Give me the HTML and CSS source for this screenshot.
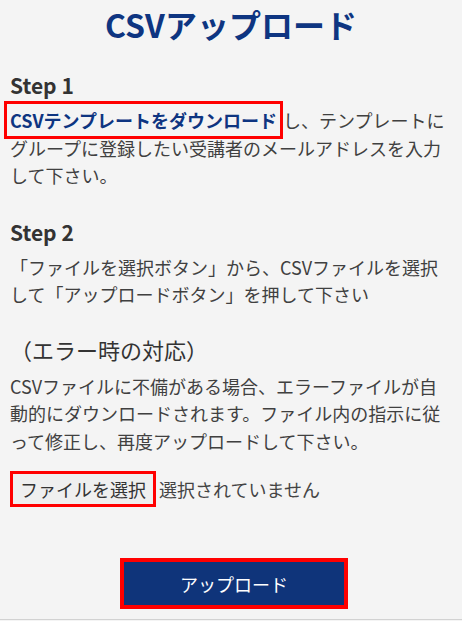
FILE: index.html
```html
<!DOCTYPE html>
<html lang="ja">
<head>
  <meta charset="UTF-8">
  <title>CSVアップロード</title>
  <meta name="viewport" content="width=device-width,initial-scale=1">
  <link rel="stylesheet" href="styles.css">
</head>
<body>
  <div class="page">
    <h1 class="title">CSVアップロード</h1>

    <div class="step">
      <h2>Step 1</h2>
      <p><a href="#" class="tpl-link">CSVテンプレートをダウンロード</a>し、テンプレートにグループに登録したい受講者のメールアドレスを入力して下さい。</p>
    </div>

    <div class="step">
      <h2>Step 2</h2>
      <p>「ファイルを選択ボタン」から、CSVファイルを選択して「アップロードボタン」を押して下さい</p>
    </div>

    <div class="step error">
      <h3>（エラー時の対応）</h3>
      <p>CSVファイルに不備がある場合、エラーファイルが自動的にダウンロードされます。ファイル内の指示に従って修正し、再度アップロードして下さい。</p>
    </div>

    <form class="upload" onsubmit="return false;">
      <div class="file-row">
        <label class="file-btn">ファイルを選択<input type="file" accept=".csv"></label>
        <span class="file-name">選択されていません</span>
      </div>
      <div class="submit-row">
        <button type="submit" class="upload-btn">アップロード</button>
      </div>
    </form>
  </div>
</body>
</html>
```

FILE: styles.css
```css
html, body {
  margin: 0;
  background: #f4f4f4;
}
body {
  font-family: "Noto Sans CJK JP", "Noto Sans", sans-serif;
  color: #404040;
}
.page {
  box-sizing: border-box;
  min-height: 620px;
  padding: 0 10px;
  border-bottom: 1px solid #d2d2d2;
}

.title {
  margin: 0;
  font-size: 32px;
  line-height: 48px;
  font-weight: bold;
  text-align: center;
  color: #0e3581;
}

.step h2 {
  margin: 22px 0 7px;
  font-size: 21px;
  line-height: 30px;
  font-weight: 600;
  color: #333;
}
.step + .step h2 {
  margin-top: 27px;
}
.step h3 {
  margin: 24px 0 8px;
  font-size: 22px;
  line-height: 32px;
  font-weight: normal;
  color: #333;
}
.step p {
  margin: 0;
  font-size: 18px;
  line-height: 27.5px;
}

/* テンプレートのリンク（赤枠で強調） */
.tpl-link {
  font-weight: bold;
  color: #0e3581;
  text-decoration: none;
  outline: 3px solid #f00;
  outline-offset: 3px;
  margin-right: 6px;
}

.upload {
  margin-top: 19px;
}
.file-row {
  display: flex;
  align-items: center;
  gap: 6px;
  font-size: 18px;
}
.file-btn {
  margin-left: 3px;
  padding: 0 7px;
  line-height: 30px;
  background: #efefef;
  color: #333;
  outline: 3px solid #f00;
  cursor: pointer;
}
.file-btn input {
  display: none;
}
.file-name {
  color: #444;
}

.submit-row {
  display: flex;
  justify-content: center;
  margin-top: 54px;
  padding-left: 6px;
}
.upload-btn {
  width: 228px;
  height: 51px;
  border: 4px solid #f00;
  background: #0f347a;
  color: #fff;
  font-family: inherit;
  font-size: 18px;
  cursor: pointer;
}
```
